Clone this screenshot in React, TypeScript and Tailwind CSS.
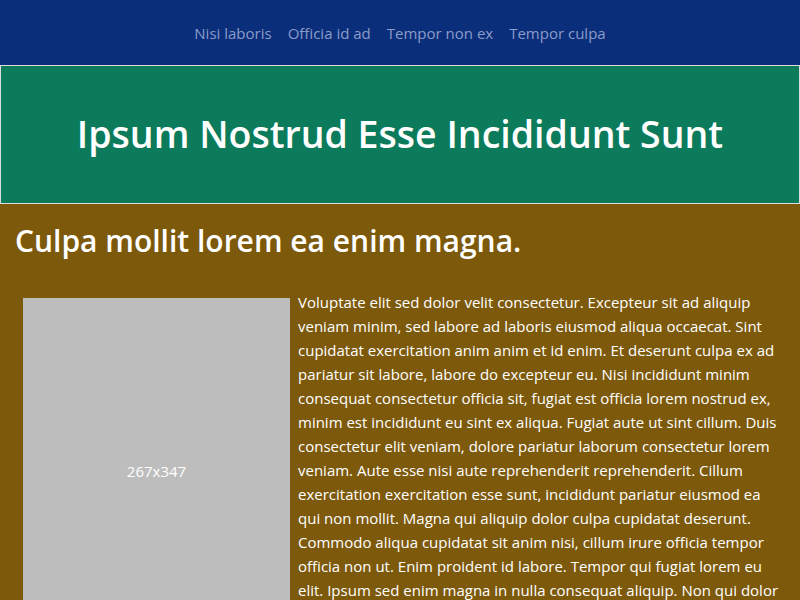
import React from "react";

const font = { fontFamily: '"Open Sans", "Noto Sans", sans-serif' };

export default function App() {
  const links = ["Nisi laboris", "Officia id ad", "Tempor non ex", "Tempor culpa"];
  return (
    <div className="min-h-[600px] bg-[#7d590b] text-white" style={font}>
      <nav className="h-[65px] pt-[2px] bg-[#0b2e7b] flex items-center justify-center gap-4">
        {links.map((l) => (
          <a key={l} className="text-[15px] text-[#8a9cc8]">
            {l}
          </a>
        ))}
      </nav>
      <header className="h-[139px] bg-[#0b7b5b] border border-[#dcdcdc] flex items-center justify-center">
        <h1 className="text-[37.5px] font-semibold">Ipsum Nostrud Esse Incididunt Sunt</h1>
      </header>
      <main className="px-[15px] pt-[16px] pb-8">
        <h2 className="text-[30px] font-semibold leading-[42px] mb-[28px]">Culpa mollit lorem ea enim magna.</h2>
        <div>
          <div className="float-left m-2 w-[267px] h-[347px] bg-[#bdbdbd] flex items-center justify-center text-[15px]">
            267x347
          </div>
          <p className="text-[15px] leading-6">
            Voluptate elit sed dolor velit consectetur. Excepteur sit ad aliquip veniam minim, sed labore ad laboris eiusmod aliqua occaecat. Sint cupidatat exercitation anim anim et id enim. Et deserunt culpa ex ad pariatur sit labore, labore do excepteur eu. Nisi incididunt minim consequat consectetur officia sit, fugiat est officia lorem nostrud ex, minim est incididunt eu sint ex aliqua. Fugiat aute ut sint cillum. Duis consectetur elit veniam, dolore pariatur laborum consectetur lorem veniam. Aute esse nisi aute reprehenderit reprehenderit. Cillum exercitation exercitation esse sunt, incididunt pariatur eiusmod ea qui non mollit. Magna qui aliquip dolor culpa cupidatat deserunt. Commodo aliqua cupidatat sit anim nisi, cillum irure officia tempor officia non ut. Enim proident id labore. Tempor qui fugiat lorem eu elit. Ipsum sed enim magna in nulla consequat aliquip. Non qui dolor esse anim et incididunt pariatur, laboris do ad sint deserunt. Velit tempor ipsum aliqua sunt.
          </p>
        </div>
      </main>
    </div>
  );
}
